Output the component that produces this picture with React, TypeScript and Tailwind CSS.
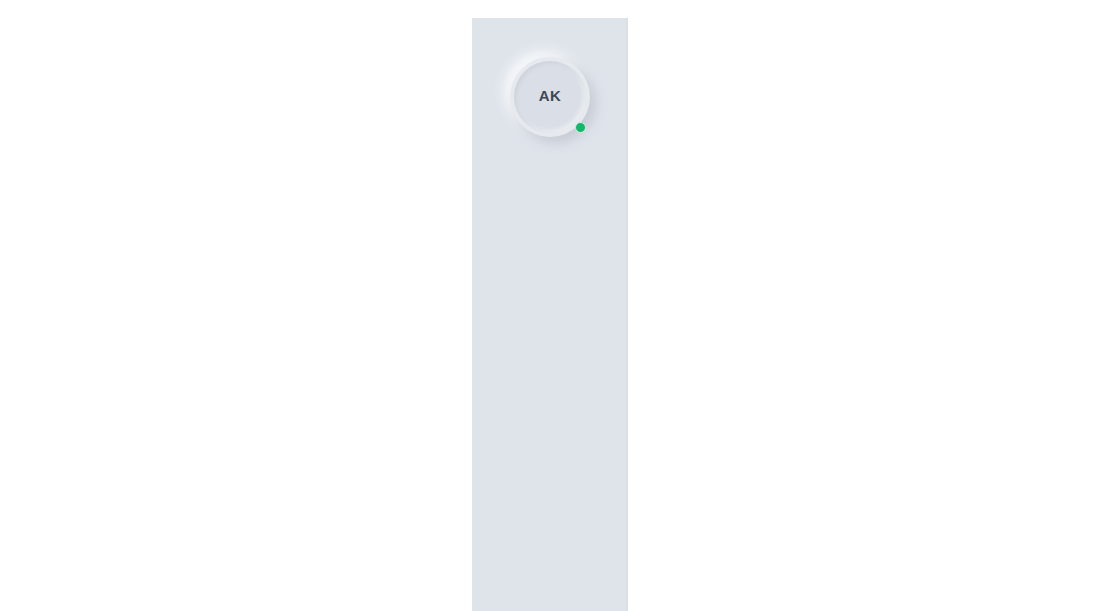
import React from "react";

export default function App() {
  return (
    <div className="min-h-screen bg-white flex justify-center pt-[18px]" style={{ fontFamily: '"Liberation Sans", Arial, sans-serif' }}>
      <aside className="w-[156px] h-[593px] bg-[#dfe4eb] flex flex-col items-center pt-[39px] shadow-[inset_-2px_0_2px_rgba(0,0,0,0.02)]">
        <div className="relative w-[80px] h-[80px] rounded-full bg-[#e6e9ee] shadow-[6px_6px_12px_#c7ccd4,-6px_-6px_12px_#f7f9fb] p-[4px]">
          <div className="w-full h-full rounded-full bg-[#dadfe7] shadow-[inset_2px_2px_4px_#cdd2da,inset_-2px_-2px_4px_#eef1f5] flex items-center justify-center">
            <span className="text-[15px] font-bold text-[#3f4755] tracking-[0.3px] mb-[2px]">AK</span>
          </div>
          <span className="absolute right-[4px] bottom-[4px] w-[11px] h-[11px] rounded-full bg-[#10b86a] border border-[#e3e7ec]" />
        </div>
      </aside>
    </div>
  );
}
